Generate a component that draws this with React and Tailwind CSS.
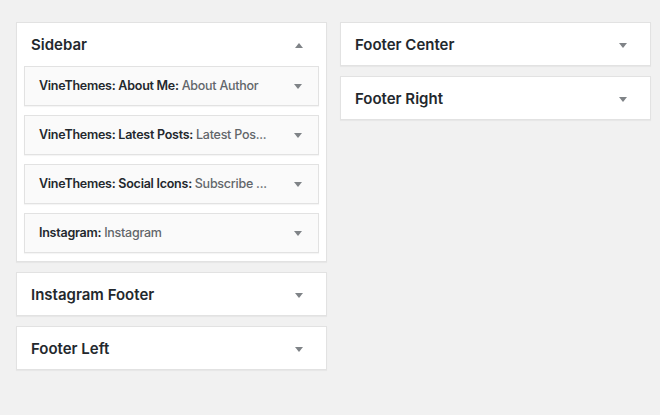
const leftAreas = [
  {
    name: 'Sidebar',
    open: true,
    widgets: [
      { title: 'VineThemes: About Me', sub: 'About Author' },
      { title: 'VineThemes: Latest Posts', sub: 'Latest Pos...' },
      { title: 'VineThemes: Social Icons', sub: 'Subscribe ...' },
      { title: 'Instagram', sub: 'Instagram' },
    ],
  },
  { name: 'Instagram Footer' },
  { name: 'Footer Left' },
]

const rightAreas = [{ name: 'Footer Center' }, { name: 'Footer Right' }]

function Arrow({ up = false }) {
  return (
    <svg width="8" height="5" viewBox="0 0 8 5" className="shrink-0">
      <path d={up ? 'M0 5 L4 0 L8 5 Z' : 'M0 0 L8 0 L4 5 Z'} fill="#7f8387" />
    </svg>
  )
}

function WidgetRow({ title, sub }) {
  return (
    <div className="h-[40px] mb-[9px] last:mb-0 flex items-center justify-between pl-[14px] pr-[16px] bg-[#fafafa] border border-[#e2e2e2] shadow-[0_1px_1px_rgba(0,0,0,0.04)]">
      <span className="text-[12.5px] tracking-[-0.25px] font-semibold text-[#23282d] whitespace-nowrap">
        {title}: <span className="font-medium text-[#62666a]">{sub}</span>
      </span>
      <Arrow />
    </div>
  )
}

function Area({ area }) {
  return (
    <div className="bg-white border border-[#e2e2e2] shadow-[0_1px_1px_rgba(0,0,0,0.04)] mb-[10px]">
      <div className="h-[42px] pt-[2px] flex items-center justify-between pl-[14px] pr-[23px]">
        <h2 className="text-[15px] font-semibold text-[#23282d]">{area.name}</h2>
        <Arrow up={area.open} />
      </div>
      {area.widgets ? (
        <div className="px-[7px] pt-[1px] pb-[8px]">
          {area.widgets.map((w) => (
            <WidgetRow key={w.title} {...w} />
          ))}
        </div>
      ) : null}
    </div>
  )
}

export default function App() {
  return (
    <div className="w-[660px] h-[415px] bg-[#f1f1f1] pt-[22px] pl-[16px] flex gap-[13px] font-['Inter','Noto_Sans',sans-serif]">
      <div className="w-[311px]">
        {leftAreas.map((a) => (
          <Area key={a.name} area={a} />
        ))}
      </div>
      <div className="w-[311px]">
        {rightAreas.map((a) => (
          <Area key={a.name} area={a} />
        ))}
      </div>
    </div>
  )
}
